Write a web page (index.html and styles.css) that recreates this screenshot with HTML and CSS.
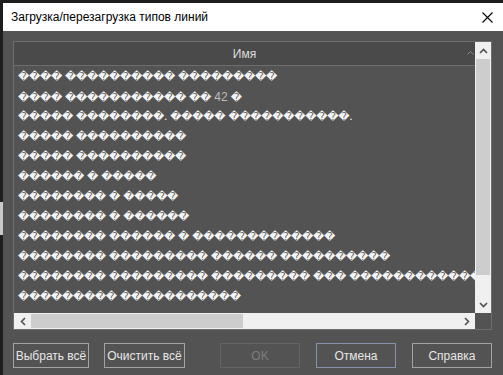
FILE: index.html
```
<!DOCTYPE html>
<html lang="ru">
<head>
  <meta charset="UTF-8" />
  <title>Загрузка/перезагрузка типов линий</title>
  <link rel="stylesheet" href="styles.css">
</head>
<body>

<div class="okno">
  <div class="titulo">
    <span>Загрузка/перезагрузка типов линий</span>
    <svg class="fechar" width="11" height="11" viewBox="0 0 11 11">
      <path d="M0.5 0.5 L10.5 10.5 M10.5 0.5 L0.5 10.5" stroke="#000" stroke-width="1.1" fill="none"/>
    </svg>
  </div>

  <div class="corpo">
    <div class="lista">
      <div class="area">
        <div class="cabecalho">
          <span>Имя</span>
          <svg class="seta" width="7" height="4" viewBox="0 0 7 4"><path d="M0.5 3.5 L3.5 0.5 L6.5 3.5" stroke="#8a8a8a" fill="none"/></svg>
        </div>
        <div class="linhas">
          <div class="linha">���� ���������� ���������</div>
          <div class="linha">���� ����������� �� <span class="num">42</span> �</div>
          <div class="linha">����� ��������. ����� �����������.</div>
          <div class="linha">����� ����������</div>
          <div class="linha">����� ����������</div>
          <div class="linha">������ � �����</div>
          <div class="linha">�������� � �����</div>
          <div class="linha">�������� � ������</div>
          <div class="linha">�������� ������ � �������������</div>
          <div class="linha">�������� ��������� ������ ����������</div>
          <div class="linha">�������� ��������� ��������� ��� ������������</div>
          <div class="linha">��������� �����������</div>
        </div>
      </div>

      <div class="vbarra">
        <div class="btn-seta">
          <svg width="9" height="6" viewBox="0 0 9 6"><path d="M1 5 L4.5 1.5 L8 5" stroke="#505050" stroke-width="1.6" fill="none"/></svg>
        </div>
        <div class="polegar-v"></div>
        <div class="trilho"></div>
        <div class="btn-seta">
          <svg width="9" height="6" viewBox="0 0 9 6"><path d="M1 1 L4.5 4.5 L8 1" stroke="#505050" stroke-width="1.6" fill="none"/></svg>
        </div>
      </div>

      <div class="hbarra">
        <div class="btn-seta-h">
          <svg width="6" height="9" viewBox="0 0 6 9"><path d="M5 1 L1.5 4.5 L5 8" stroke="#505050" stroke-width="1.6" fill="none"/></svg>
        </div>
        <div class="polegar-h"></div>
        <div class="trilho"></div>
        <div class="btn-seta-h">
          <svg width="6" height="9" viewBox="0 0 6 9"><path d="M1 1 L4.5 4.5 L1 8" stroke="#505050" stroke-width="1.6" fill="none"/></svg>
        </div>
      </div>

      <div class="canto"></div>
    </div>

    <div class="botoes">
      <button class="botao b1">Выбрать всё</button>
      <button class="botao b2">Очистить всё</button>
      <button class="botao b3 inativo">OK</button>
      <button class="botao b4 foco">Отмена</button>
      <button class="botao b5">Справка</button>
    </div>
  </div>
</div>

</body>
</html>
```

FILE: styles.css
```
body {
  background-color: #1e1e1e;
  background-image: linear-gradient(#c8c8c8, #c8c8c8);
  background-size: 3px 33px;
  background-position: 0 202px;
  background-repeat: no-repeat;
  margin: 0;
  padding: 3px 0 0 3px;
  font-family: "Liberation Sans", Arial, sans-serif;
  overflow: hidden;
  height: 372px;
}
.okno {
  width: 500px;
  height: 372px;
  display: flex;
  flex-direction: column;
}
.titulo {
  height: 28px;
  background-color: #fff;
  display: flex;
  align-items: center;
  justify-content: space-between;
  padding: 0 10px 0 8px;
  font-size: 12px;
  color: #000;
}
.fechar {
  display: block;
}
.corpo {
  flex: 1;
  background-color: #535353;
  padding: 10px 8px 0 10px;
}
.lista {
  border: 1px solid #6e6e6e;
  height: 287px;
  width: 477px;
  display: grid;
  grid-template-columns: 1fr 16px;
  grid-template-rows: 1fr 16px;
}
.area {
  overflow: hidden;
}
.cabecalho {
  height: 23px;
  background-color: #4a4a4a;
  border-bottom: 1px solid #6e6e6e;
  color: #dcdcdc;
  font-size: 12px;
  display: flex;
  align-items: center;
  justify-content: center;
  position: relative;
}
.seta {
  position: absolute;
  right: 1px;
  top: 9px;
}
.linhas {
  padding: 1px 0 0 4px;
}
.linha {
  height: 20px;
  line-height: 20px;
  white-space: nowrap;
  font-family: "DejaVu Sans", sans-serif;
  font-size: 11px;
  letter-spacing: -0.3px;
  color: #f4f4f4;
}
.num {
  font-family: "Liberation Sans", Arial, sans-serif;
  color: #bdbdbd;
  font-size: 12px;
  letter-spacing: 0;
}
.vbarra {
  background-color: #f0f0f0;
  display: flex;
  flex-direction: column;
}
.hbarra {
  background-color: #f0f0f0;
  display: flex;
}
.btn-seta {
  height: 17px;
  display: flex;
  align-items: center;
  justify-content: center;
}
.btn-seta-h {
  width: 17px;
  display: flex;
  align-items: center;
  justify-content: center;
}
.polegar-v {
  height: 216px;
  background-color: #cdcdcd;
  margin: 0 1px;
}
.polegar-h {
  width: 212px;
  background-color: #cdcdcd;
  margin: 1px 0;
}
.trilho {
  flex: 1;
}
.canto {
  background-color: #535353;
}
.botoes {
  display: flex;
  margin-top: 13px;
}
.botao {
  height: 25px;
  background-color: #535353;
  border: 1px solid #a3a3a3;
  color: #e6e6e6;
  font-family: "Liberation Sans", Arial, sans-serif;
  font-size: 12px;
  padding: 0;
}
.b1 { width: 76px; }
.b2 { width: 81px; margin-left: 15px; }
.b3 { width: 80px; margin-left: 35px; }
.b4 { width: 80px; margin-left: 16px; }
.b5 { width: 80px; margin-left: 16px; }
.inativo {
  border-color: #636363;
  color: #7c7c7c;
}
.foco {
  border-color: #8493ab;
}
```
